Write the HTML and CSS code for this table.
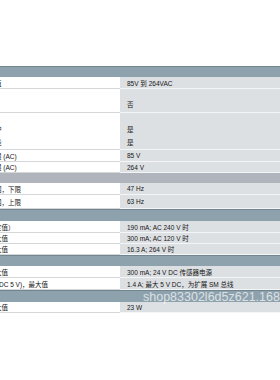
FILE: index.html
```html
<!DOCTYPE html>
<html lang="zh">
<head>
<meta charset="utf-8">
<link rel="stylesheet" href="styles.css">
</head>
<body>
<div class="page">
  <div class="table">
    <div class="bar dark h11"><span class="bar-text">电源</span></div>
    <div class="row h12"><div class="lab">输入电压额定值</div><div class="val">85V 到 264VAC</div></div>
    <div class="row h24"><div class="lab top">电源故障缓冲</div><div class="val top">否</div></div>
    <div class="row h37"><div class="lab top2">防极性反接保护<br>过电压保护功能</div><div class="val top2">是<br>是</div></div>
    <div class="row h12"><div class="lab">允许范围，下限 (AC)</div><div class="val">85 V</div></div>
    <div class="row h11"><div class="lab">允许范围，上限 (AC)</div><div class="val">264 V</div></div>
    <div class="bar light h10"><span class="bar-text">电源频率</span></div>
    <div class="row h12"><div class="lab">允许的频率范围，下限</div><div class="val">47 Hz</div></div>
    <div class="row h14"><div class="lab">允许的频率范围，上限</div><div class="val">63 Hz</div></div>
    <div class="bar dark h12"><span class="bar-text">输入电流</span></div>
    <div class="row h12"><div class="lab">耗用电流（额定值）</div><div class="val">190 mA; AC 240 V 时</div></div>
    <div class="row h11"><div class="lab">耗用电流，最大值</div><div class="val">300 mA; AC 120 V 时</div></div>
    <div class="row h11"><div class="lab">接通电流，最大值</div><div class="val">16.3 A; 264 V 时</div></div>
    <div class="bar dark h11"><span class="bar-text">输出电流</span></div>
    <div class="row h12"><div class="lab">供传感器，最大值</div><div class="val">300 mA; 24 V DC 传感器电源</div></div>
    <div class="row h12"><div class="lab">用于背板总线 (DC 5 V)，最大值</div><div class="val">1.4 A; 最大 5 V DC，为扩展 SM 总线</div></div>
    <div class="bar dark h12"><span class="bar-text">功率损耗</span></div>
    <div class="row h11"><div class="lab">功率损耗，最大值</div><div class="val">23 W</div></div>
  </div>
  <div class="watermark">shop83302l6d5z621.168</div>
</div>
</body>
</html>
```
FILE: styles.css
```css
html, body {
  margin: 0;
  padding: 0;
  background: #ffffff;
  overflow: hidden;
}
.page {
  position: relative;
  width: 280px;
  height: 380px;
  padding-top: 66px;
  box-sizing: border-box;
  overflow: hidden;
  font-family: "Liberation Sans", "Noto Sans CJK SC", sans-serif;
  font-size: 6.5px;
  color: #151515;
}
.table {
  margin-left: -52px;
  display: flex;
  flex-direction: column;
  width: 332px;
}
.row {
  display: flex;
}
.lab {
  width: 172px;
  flex: none;
  box-sizing: border-box;
  padding-left: 8px;
  border-bottom: 1px solid #d5d7d9;
  white-space: nowrap;
  overflow: hidden;
  display: flex;
  align-items: center;
}
.val {
  flex: 1;
  box-sizing: border-box;
  padding-left: 7px;
  background: #dde0e3;
  border-bottom: 1px solid #f4f5f6;
  white-space: nowrap;
  display: flex;
  align-items: center;
}
.lab.top, .val.top {
  align-items: flex-start;
  padding-top: 10px;
  line-height: 11px;
}
.lab.top2, .val.top2 {
  display: block;
  padding-top: 10px;
  line-height: 13px;
}
.bar {
  display: flex;
  align-items: center;
  padding-left: 8px;
  box-sizing: border-box;
  white-space: nowrap;
}
.bar.dark {
  background: #8ea2ae;
  border-top: 1px solid #73868f;
}
.bar.light {
  background: #b0b4bd;
}
.bar-text {
  color: #ffffff;
  font-weight: bold;
}
.h10 { height: 10px; }
.h11 { height: 11px; }
.h12 { height: 12px; }
.h14 { height: 14px; }
.h24 { height: 24px; }
.h37 { height: 37px; }
.watermark {
  position: absolute;
  left: 143px;
  top: 290px;
  font-family: "Liberation Sans", sans-serif;
  font-size: 12.5px;
  color: rgba(255, 255, 255, 0.7);
  white-space: nowrap;
}
```
